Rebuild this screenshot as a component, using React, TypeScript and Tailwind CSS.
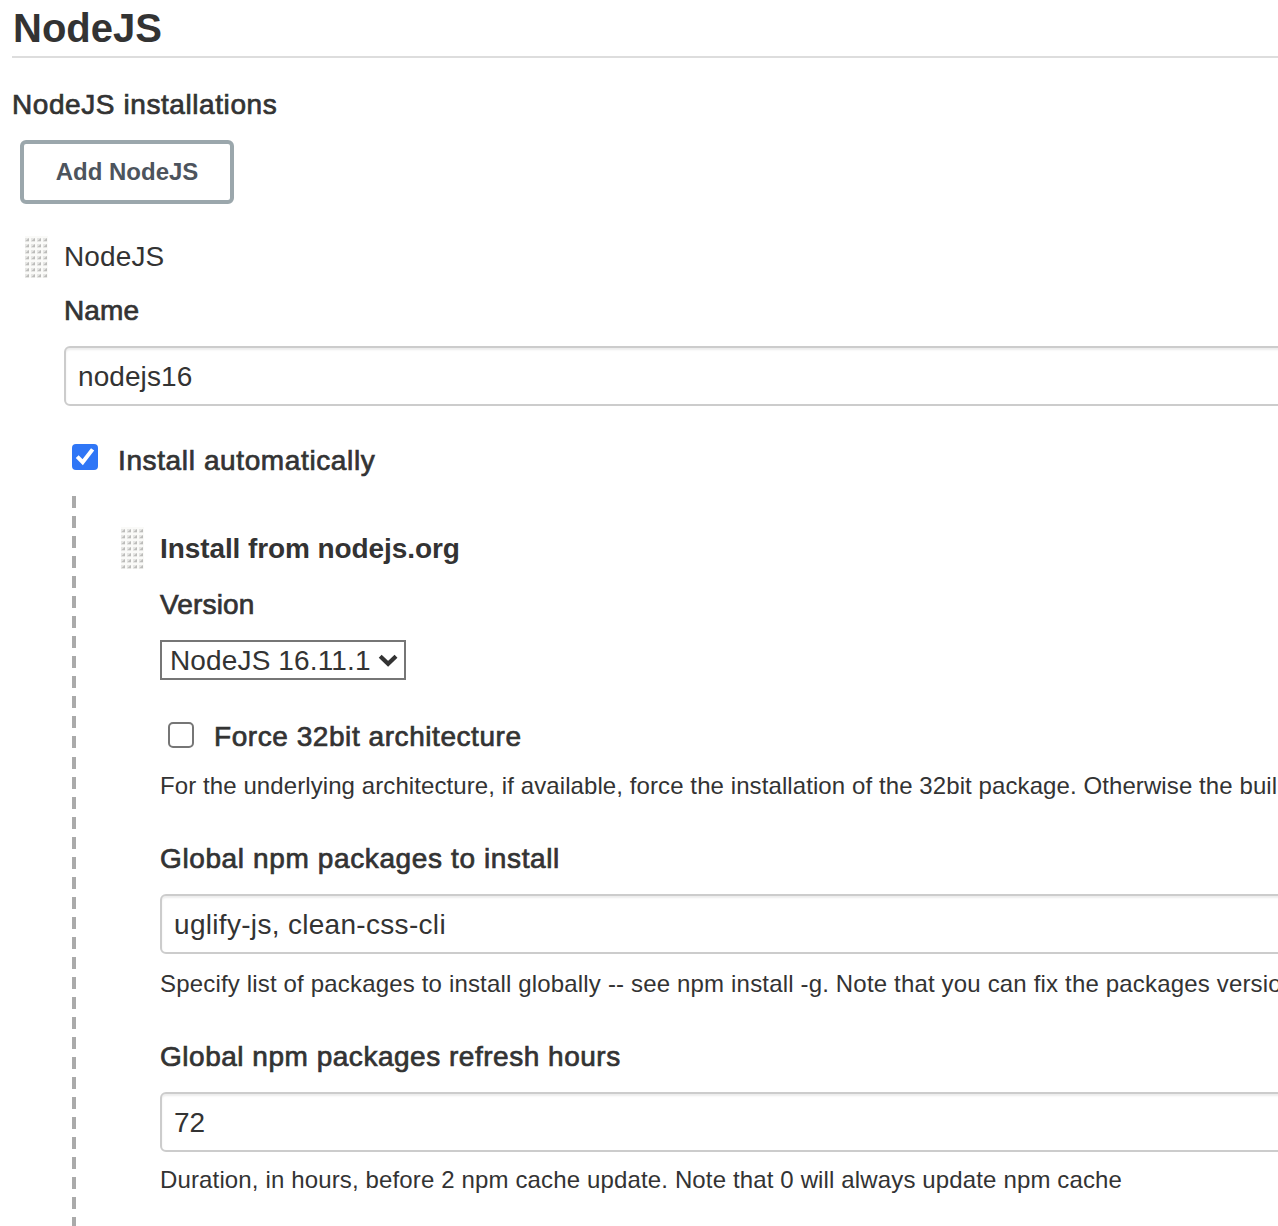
import { useId, type ReactNode } from "react";

const MEDIUM = "[-webkit-text-stroke:0.7px_#333]";

function Grip() {
  const id = useId();
  return (
    <svg width="25" height="42" viewBox="0 0 25 42" className="shrink-0" aria-hidden="true">
      <defs>
        <pattern id={id} width="6" height="6" patternUnits="userSpaceOnUse">
          <rect width="6" height="6" fill="#fafaf8" />
          <rect x="1" y="2" width="4" height="4" fill="#e6e6e4" />
          <path d="M5 2V5H1.5Z" fill="#bcbcba" />
        </pattern>
      </defs>
      <rect x="1" width="23" height="42" fill={`url(#${id})`} />
    </svg>
  );
}

function Label({ className, children }: { className: string; children: ReactNode }) {
  return (
    <div className={`h-10 text-[28px] leading-[42px] ${MEDIUM} ${className}`}>{children}</div>
  );
}

function TextField({ value, className }: { value: string; className: string }) {
  return (
    <input
      type="text"
      defaultValue={value}
      className={`block h-[60px] w-[1300px] rounded-[6px] border-2 border-[#ccc] bg-white pt-0.5 pl-3 text-[28px] text-[#333] shadow-[inset_0_2px_2px_rgba(0,0,0,0.075)] outline-none ${className}`}
    />
  );
}

function Description({ className, children }: { className: string; children: ReactNode }) {
  return <p className={`h-8 text-[24px] leading-8 ${className}`}>{children}</p>;
}

export default function App() {
  return (
    <main className="h-[1226px] w-full overflow-hidden bg-white pl-3 font-['Liberation_Sans',Arial,sans-serif] whitespace-nowrap text-[#333]">
      <h1 className="h-[58px] border-b-2 border-[#ddd] pl-px text-[40px] leading-[56px] font-bold">
        NodeJS
      </h1>

      <Label className="mt-[26px] tracking-[0.58px]">NodeJS installations</Label>
      <button className="mt-4 ml-2 flex h-16 w-[214px] items-center justify-center rounded-[6px] border-4 border-[#9ba7ac] bg-white text-[24px] leading-8 font-bold text-[#4d545d]">
        Add NodeJS
      </button>

      <section className="mt-8 ml-3">
        <div className="flex h-[42px] items-center">
          <Grip />
          <span className="ml-[15px] text-[28px] leading-10 tracking-[0.12px]">NodeJS</span>
        </div>

        <div className="ml-10">
          <Label className="mt-3 tracking-[0.15px]">Name</Label>
          <TextField value="nodejs16" className="mt-4 tracking-[0.08px]" />

          <div className="mt-[34px] flex h-10 items-center">
            <span className="mt-[-6px] ml-2 flex size-[26px] items-center justify-center rounded-[4px] bg-[#2f76f6]">
              <svg width="26" height="26" viewBox="0 0 26 26" fill="none" aria-hidden="true">
                <path d="M5.2 12.6 10.7 18.2 20.6 5.4" stroke="#fff" strokeWidth="4" />
              </svg>
            </span>
            <Label className="ml-5 tracking-[0.62px]">Install automatically</Label>
          </div>
        </div>

        <div className="mt-4 ml-12 flex">
          <div className="h-[760px] w-1 shrink-0 bg-[repeating-linear-gradient(to_bottom,#aaa_0px,#aaa_12px,transparent_12px,transparent_20.04px)]" />
          <div className="ml-11 pt-[31px]">
            <div className="flex h-[42px] items-center">
              <Grip />
              <span className="ml-[15px] pt-0.5 text-[28px] leading-10 font-bold tracking-[-0.09px]">
                Install from nodejs.org
              </span>
            </div>

            <div className="ml-10">
              <Label className="mt-[15px] tracking-[0.15px]">Version</Label>
              <div className="mt-4 grid h-10 w-[246px] items-center">
                <select className="col-start-1 row-start-1 h-10 appearance-none border-2 border-[#767676] bg-white pt-0.5 pl-2 text-[28px] leading-[34px] tracking-[0.14px] text-[#333] outline-none">
                  <option>NodeJS 16.11.1</option>
                </select>
                <svg
                  width="20"
                  height="14"
                  viewBox="0 0 20 14"
                  fill="none"
                  className="pointer-events-none col-start-1 row-start-1 mr-2 justify-self-end"
                  aria-hidden="true"
                >
                  <path d="M2.2 3.2 10.1 10.8 18 3.2" stroke="#333" strokeWidth="4.2" />
                </svg>
              </div>

              <div className="mt-9 flex h-10 items-center">
                <span className="mt-[-2px] ml-2 size-[26px] rounded-[5px] border-2 border-[#767676] bg-white" />
                <Label className="ml-5 tracking-[0.56px]">Force 32bit architecture</Label>
              </div>
              <Description className="mt-[14px] tracking-[0.09px]">
                For the underlying architecture, if available, force the installation of the 32bit
                package. Otherwise the buil
              </Description>

              <Label className="mt-9 tracking-[0.62px]">Global npm packages to install</Label>
              <TextField value="uglify-js, clean-css-cli" className="mt-4 tracking-[0.31px]" />
              <Description className="mt-[14px] tracking-[0.17px]">
                Specify list of packages to install globally -- see npm install -g. Note that you can
                fix the packages versio
              </Description>

              <Label className="mt-9 tracking-[0.52px]">Global npm packages refresh hours</Label>
              <TextField value="72" className="mt-4" />
              <Description className="mt-3 tracking-[0.14px]">
                Duration, in hours, before 2 npm cache update. Note that 0 will always update npm cache
              </Description>
            </div>
          </div>
        </div>
      </section>
    </main>
  );
}
